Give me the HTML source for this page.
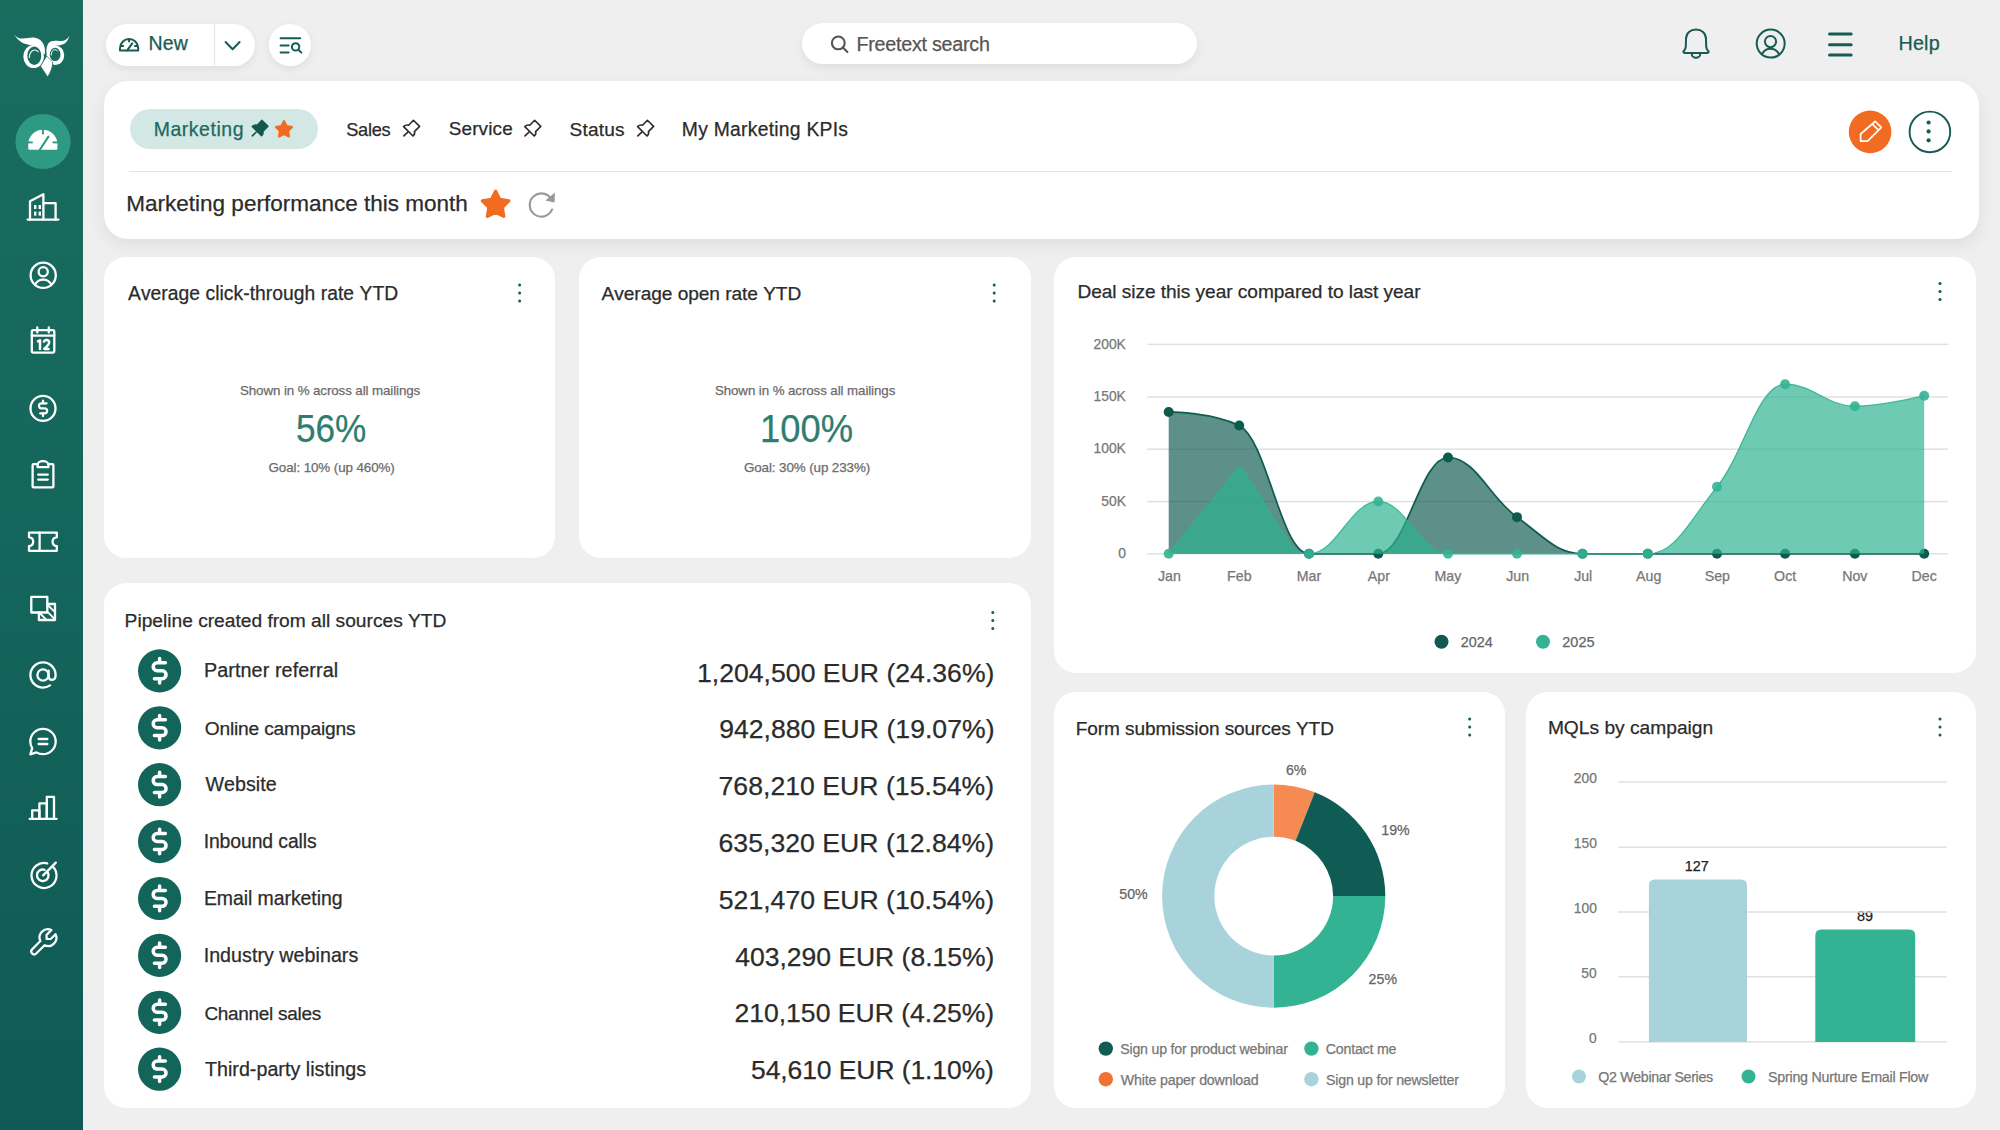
<!DOCTYPE html>
<html><head><meta charset="utf-8"><title>Marketing dashboard</title>
<style>
html,body{margin:0;padding:0}
body{width:2000px;height:1130px;overflow:hidden;background:#efefef;position:relative;font-family:"Liberation Sans",sans-serif;}
.t{position:absolute;white-space:nowrap;line-height:1;font-kerning:none;-webkit-text-stroke:0.25px currentColor;}
.card{position:absolute;background:#fff;}
.ic{position:absolute;overflow:visible}
</style></head><body>

<div style="position:absolute;left:0;top:0;width:83px;height:1130px;background:linear-gradient(180deg,#1a6c5f 0%,#14655b 50%,#0f5a55 100%)"></div>
<svg class="ic" style="left:0;top:0" width="83" height="1130" viewBox="0 0 83 1130"><g fill="#fff" fill-rule="evenodd"><path d="M14,34.4 C17,37.8 20,38.8 23,38.6 C27,38.2 31,37.2 35,37.8 C40,38.6 44.6,43 45,50 L44.8,54.5 L41.2,51.8 C40.2,48.6 38.2,46.2 34.3,45.4 C29,44.7 24,44.3 20.5,41.4 C18,39.6 15.5,36.8 14,34.4 Z"/><path d="M69.4,35.9 C67.2,39.5 64.6,40.7 61,40.9 C57,41.1 53.6,40.3 50.6,41.6 C47.6,43.1 46.3,47 46.4,52 L46.8,56 L49.7,53.6 C50.3,50.1 51.6,47.9 53.6,46.7 C56.1,45.3 60.1,45.6 63.2,44.3 C66.1,43.1 68.1,40.1 69.4,35.9 Z"/><path d="M23.3,56.5 A10.35,11.5 0 1 0 44,56.5 A10.35,11.5 0 1 0 23.3,56.5 Z M27.3,55.8 A7,9.2 0 1 1 41.3,55.8 A7,9.2 0 1 1 27.3,55.8 Z"/><path d="M46.7,55.25 A8.75,9.75 0 1 0 64.2,55.25 A8.75,9.75 0 1 0 46.7,55.25 Z M49.7,54.4 A5.4,6.7 0 1 1 60.5,54.4 A5.4,6.7 0 1 1 49.7,54.4 Z"/></g><path d="M40.5,66.3 L46.7,56.1 L52.6,61.9 C52.7,67.5 50.6,72.5 47.6,76.9 C45.3,73.2 42.8,69.7 40.5,66.3 Z" fill="#fff" stroke="#1a6c5f" stroke-width="0.7"/><path d="M29.2,58 C29.4,52.5 32,49.8 35,50 C36.6,50.1 37.8,51 38.4,52.2" stroke="#fff" stroke-width="1.1" fill="none"/><path d="M51.2,55.5 C51.3,51.6 53,49.6 55.2,49.7 C56.4,49.8 57.2,50.4 57.7,51.3" stroke="#fff" stroke-width="1" fill="none"/><circle cx="43" cy="141.5" r="27.6" fill="#2e9a84"/><path d="M28.3,144.3 A14.55,14.55 0 0 1 57.4,144.3 L57.4,148.5 Q57.4,149.7 56.2,149.7 L29.5,149.7 Q28.3,149.7 28.3,148.5 Z" fill="#fff"/><g stroke="#2e9a84" stroke-width="1.9" stroke-linecap="butt"><line x1="43" y1="129" x2="43" y2="134.4"/><line x1="27.5" y1="142.4" x2="32.8" y2="142.4"/><line x1="52.6" y1="142.4" x2="58" y2="142.4"/><line x1="39.4" y1="150.5" x2="48.4" y2="136.6" stroke-width="2.1" stroke-linecap="round"/></g><g stroke="#fff" fill="none" stroke-width="2.3" stroke-linecap="round" stroke-linejoin="round"><path d="M27.6,219.6 H58.4"/><path d="M30,219.6 V201.3 L43.4,194.2 V219.6"/><path d="M43.4,203.2 H55.6 V219.6"/></g><g fill="#fff"><rect x="34" y="205" width="2.4" height="4"/><rect x="38.6" y="205" width="2.4" height="4"/><rect x="34" y="211.6" width="2.4" height="4"/><rect x="38.6" y="211.6" width="2.4" height="4"/></g><g stroke="#fff" fill="none" stroke-width="2.3" stroke-linecap="round" stroke-linejoin="round"><circle cx="43.2" cy="275.3" r="12.6"/><circle cx="43.2" cy="271.8" r="4.6"/><path d="M35,284.6 C37,281 40,279.6 43.2,279.6 C46.4,279.6 49.4,281 51.4,284.6"/></g><g stroke="#fff" fill="none" stroke-width="2.3" stroke-linecap="round" stroke-linejoin="round"><rect x="31.8" y="330.2" width="22.5" height="22.4" rx="1.6"/><path d="M31.8,335.6 H54.3"/><path d="M37.3,327.4 V332.4 M48.8,327.4 V332.4"/></g><g stroke="#fff" fill="none" stroke-width="2.5" stroke-linejoin="round" stroke-linecap="butt"><path d="M37.2,341.9 L40,340.2 V350"/><path d="M43.8,342.6 C44,340.9 45,340.1 46.5,340.1 C48.2,340.1 49.2,341.1 49.2,342.6 C49.2,344.2 47.9,345.6 44.3,348.9 H49.6"/></g><g stroke="#fff" fill="none" stroke-width="2.3" stroke-linecap="round" stroke-linejoin="round"><circle cx="43" cy="408.4" r="12.5"/></g><g stroke="#fff" fill="none" stroke-width="2.2" stroke-linecap="round" stroke-linejoin="round"><path d="M46.6,403.3 H41.5 A2.5,2.5 0 0 0 41.5,408.3 H44.6 A2.55,2.55 0 0 1 44.6,413.4 H40.2"/><path d="M43,400.7 V403.3 M43,413.4 V416.1"/></g><g stroke="#fff" fill="none" stroke-width="2.3" stroke-linecap="round" stroke-linejoin="round"><path d="M37.6,464.2 H33.6 Q32.6,464.2 32.6,465.2 V486.4 Q32.6,487.4 33.6,487.4 H52.4 Q53.4,487.4 53.4,486.4 V465.2 Q53.4,464.2 52.4,464.2 H48.4"/><path d="M37.6,467.2 V464.8 C37.6,462.6 40,461.2 43,461.2 C46,461.2 48.4,462.6 48.4,464.8 V467.2 Z"/><path d="M38.2,474.6 H47.8 M38.2,479.6 H47.8"/></g><g stroke="#fff" fill="none" stroke-width="2.3" stroke-linecap="round" stroke-linejoin="round"><path d="M29,532.6 H56.8 V537.2 C54.2,537.6 52.6,539.4 52.6,541.7 C52.6,544 54.2,545.8 56.8,546.2 V550.8 H29 V546.2 C31.6,545.8 33.2,544 33.2,541.7 C33.2,539.4 31.6,537.6 29,537.2 Z"/><path d="M39.6,532.6 V550.8"/></g><g stroke="#fff" fill="none" stroke-width="2.3" stroke-linecap="round" stroke-linejoin="round"><rect x="31.3" y="596.9" width="16" height="15.6"/><path d="M47.3,604 H55 V620 H38.9 V612.5"/></g><g stroke="#fff" stroke-width="1.9" stroke-linecap="butt"><path d="M47.3,604.6 L54.4,611.7 M47.3,611.6 L55,619.3 M39.6,613 L46.3,619.7"/></g><g stroke="#fff" fill="none" stroke-width="2.3" stroke-linecap="round" stroke-linejoin="round"><circle cx="43" cy="675" r="5.6"/><path d="M48.6,670.6 V676.2 C48.6,678.6 50.2,679.8 52,679.8 C54.6,679.8 55.6,677.2 55.6,675 C55.6,668 50,662.4 43,662.4 C36,662.4 30.4,668 30.4,675 C30.4,682 36,687.6 43,687.6 C45.8,687.6 48,686.8 50,685.4"/></g><g stroke="#fff" fill="none" stroke-width="2.3" stroke-linecap="round" stroke-linejoin="round"><path d="M32.2,748.2 C30.9,746 30.3,743.6 30.3,741.5 C30.3,734.5 36,728.8 43,728.8 C50,728.8 55.7,734.5 55.7,741.5 C55.7,748.5 50,754.2 43,754.2 C40.5,754.2 38.3,753.6 36.4,752.4 L30.4,754.3 Z"/><path d="M38.6,739 H47.4 M38.6,744 H47.4"/></g><g stroke="#fff" fill="none" stroke-width="2.3" stroke-linecap="round" stroke-linejoin="round"><path d="M29.6,818.8 H56.6"/><path d="M32.2,818.8 V810.4 H39.4 V818.8"/><path d="M39.4,818.8 V803.4 H46.8 V818.8"/><path d="M46.8,818.8 V796.8 H54 V818.8"/></g><g stroke="#fff" fill="none" stroke-width="2.3" stroke-linecap="round" stroke-linejoin="round"><path d="M52.8,866.6 A12.5,12.5 0 1 1 47.2,863.4"/><path d="M47.9,872.6 A5.8,5.8 0 1 1 44.6,869.8"/><path d="M43.2,875.4 L55.8,862.6"/></g><g transform="translate(60.4,925.2) scale(-1.38,1.38)" stroke="#fff" fill="none" stroke-width="1.62" stroke-linecap="round" stroke-linejoin="round"><path d="M7,10 h3 v-3 l-3.5,-3.5 a6,6 0 0 1 8,8 l6,6 a2,2 0 0 1 -3,3 l-6,-6 a6,6 0 0 1 -8,-8 l3.5,3.5"/></g></svg>
<div class="card" style="left:105.5px;top:24.4px;width:149.5px;height:41.2px;border-radius:21px;box-shadow:0 3px 8px rgba(0,0,0,0.07)"></div>
<div style="position:absolute;left:213.8px;top:24.4px;width:1.2px;height:41.2px;background:#e4e4e4"></div>
<div class="card" style="left:269.4px;top:24.4px;width:41.3px;height:41.2px;border-radius:50%;box-shadow:0 3px 8px rgba(0,0,0,0.07)"></div>
<div class="card" style="left:802.4px;top:23.4px;width:394.6px;height:41px;border-radius:21px;box-shadow:0 4px 10px rgba(0,0,0,0.07)"></div>
<svg class="ic" style="left:0;top:0" width="2000" height="80" viewBox="0 0 2000 80"><g stroke="#175c52" fill="none" stroke-width="2" stroke-linecap="round" stroke-linejoin="round"><path d="M120,50.6 V48.2 A9.1,9.1 0 0 1 138.2,48.2 V50.6 Z"/><path d="M129.1,39.2 V41.4 M121.2,46 H123.2 M135,46 H137 M127.2,50.4 L132.2,43.4"/></g><path d="M225.6,42 L232.6,49.2 L239.6,42" stroke="#175c52" fill="none" stroke-width="2" stroke-linecap="round" stroke-linejoin="round"/><g stroke="#175c52" fill="none" stroke-width="2" stroke-linecap="round" stroke-linejoin="round" stroke-width="2.2"><path d="M280.6,38.2 H300.2 M280.6,45.6 H288.6 M280.6,52.4 H288.6"/><circle cx="295.6" cy="46.9" r="3.7"/><path d="M298.4,49.7 L301.4,52.6"/></g><g stroke="#555" fill="none" stroke-width="2.1" stroke-linecap="round"><circle cx="838.3" cy="42.9" r="6.4"/><path d="M843,47.6 L847.4,52.1"/></g><g stroke="#175c52" fill="none" stroke-width="2" stroke-linecap="round" stroke-linejoin="round" stroke-width="2.3"><path d="M1696,29.5 C1690.4,29.5 1686.2,33 1686,38.8 L1685.8,46.6 C1685.7,49.6 1684.2,50.4 1683.6,51.2 C1683,52 1683.4,53 1684.6,53 H1707.4 C1708.6,53 1709,52 1708.4,51.2 C1707.8,50.4 1706.3,49.6 1706.2,46.6 L1706,38.8 C1705.8,33 1701.6,29.5 1696,29.5 Z"/><path d="M1691.7,53.4 A4.3,4.3 0 0 0 1700.3,53.4"/></g><g stroke="#175c52" fill="none" stroke-width="2" stroke-linecap="round" stroke-linejoin="round" stroke-width="2.3"><circle cx="1770.7" cy="43.6" r="14"/><circle cx="1770.5" cy="41.6" r="5.6"/><path d="M1762.2,53.6 C1764.2,50.4 1767.2,48.8 1770.5,48.8 C1773.8,48.8 1776.8,50.4 1778.8,53.6"/></g><g fill="#175c52"><rect x="1828" y="32.4" width="24.6" height="3" rx="1.5"/><rect x="1828" y="43.2" width="24.6" height="3" rx="1.5"/><rect x="1828" y="53.4" width="24.6" height="3" rx="1.5"/></g></svg>
<span class="t" style="left:148.50px;top:34.20px;font-size:19.53px;color:#175c52;letter-spacing:0.125px">New</span>
<span class="t" style="left:856.50px;top:34.84px;font-size:19.72px;color:#555;letter-spacing:-0.250px">Freetext search</span>
<span class="t" style="left:1898.50px;top:33.69px;font-size:19.78px;color:#175c52;letter-spacing:0.167px">Help</span>
<div class="card" style="left:104px;top:81px;width:1875px;height:158px;border-radius:24px;box-shadow:0 6px 18px rgba(0,0,0,0.07)"></div>
<div style="position:absolute;left:129.6px;top:109.3px;width:188px;height:39.5px;border-radius:20px;background:#d3e7e4"></div>
<div style="position:absolute;left:129px;top:170.8px;width:1823px;height:1.5px;background:#e3e5e5"></div>
<svg class="ic" style="left:0;top:80" width="2000" height="160" viewBox="0 80 2000 160"><path d="M261.90,120.20 L268.10,126.30 L262.90,131.50 C263.50,133.30 263.00,134.90 261.50,135.90 L252.10,126.50 C253.50,125.10 255.30,124.70 257.10,125.10 Z" fill="#11594f" stroke="#11594f" stroke-width="1.2" stroke-linejoin="round"/><path d="M256.30,132.00 L252.30,135.80" stroke="#11594f" stroke-width="1.6" stroke-linecap="round"/><polygon points="284.00,121.20 286.59,126.04 291.99,127.00 288.18,130.96 288.94,136.40 284.00,134.00 279.06,136.40 279.82,130.96 276.01,127.00 281.41,126.04" fill="#f26b22" stroke="#f26b22" stroke-width="2.2" stroke-linejoin="round"/><g stroke="#2b2b2b" fill="none" stroke-width="1.6" stroke-linejoin="round" stroke-linecap="round"><path d="M413.40,120.30 L419.60,126.40 L414.40,131.60 C415.00,133.40 414.50,135.00 413.00,136.00 L403.60,126.60 C405.00,125.20 406.80,124.80 408.60,125.20 Z"/><path d="M407.80,132.10 L403.80,135.90"/></g><g stroke="#2b2b2b" fill="none" stroke-width="1.6" stroke-linejoin="round" stroke-linecap="round"><path d="M534.60,120.30 L540.80,126.40 L535.60,131.60 C536.20,133.40 535.70,135.00 534.20,136.00 L524.80,126.60 C526.20,125.20 528.00,124.80 529.80,125.20 Z"/><path d="M529.00,132.10 L525.00,135.90"/></g><g stroke="#2b2b2b" fill="none" stroke-width="1.6" stroke-linejoin="round" stroke-linecap="round"><path d="M647.40,120.30 L653.60,126.40 L648.40,131.60 C649.00,133.40 648.50,135.00 647.00,136.00 L637.60,126.60 C639.00,125.20 640.80,124.80 642.60,125.20 Z"/><path d="M641.80,132.10 L637.80,135.90"/></g><circle cx="1870.1" cy="131.9" r="21.3" fill="#f26b22"/><g stroke="#fff" fill="none" stroke-width="1.7" stroke-linejoin="round"><path d="M1875.2,121.3 L1881.3,127.4 L1867.6,141.1 H1860.6 V134 Z"/><path d="M1872.4,124.1 L1878.5,130.2"/></g><circle cx="1929.9" cy="131.9" r="20.3" fill="none" stroke="#175c52" stroke-width="1.9"/><g fill="#175c52"><circle cx="1928.6" cy="122.5" r="2.1"/><circle cx="1928.6" cy="131.4" r="2.1"/><circle cx="1928.6" cy="140.3" r="2.1"/></g><polygon points="495.60,191.20 499.77,199.36 508.82,200.80 502.35,207.29 503.77,216.35 495.60,212.20 487.43,216.35 488.85,207.29 482.38,200.80 491.43,199.36" fill="#f26b22" stroke="#f26b22" stroke-width="3.2" stroke-linejoin="round"/><g stroke="#999" fill="none" stroke-width="2.1" stroke-linecap="round"><path d="M551.6,199.6 A11.6,11.6 0 1 0 552.1,209.4"/></g><path d="M554.9,192.6 L554.6,202.6 L545.4,200.6 Z" fill="#999"/></svg>
<span class="t" style="left:153.70px;top:119.96px;font-size:19.46px;color:#1b6a5e;letter-spacing:0.556px">Marketing</span>
<span class="t" style="left:346.15px;top:120.99px;font-size:18.25px;color:#2b2b2b;letter-spacing:-0.287px">Sales</span>
<span class="t" style="left:448.75px;top:120.38px;font-size:18.96px;color:#2b2b2b;letter-spacing:0.133px">Service</span>
<span class="t" style="left:569.45px;top:120.27px;font-size:19.09px;color:#2b2b2b;letter-spacing:0.220px">Status</span>
<span class="t" style="left:681.80px;top:120.09px;font-size:19.31px;color:#2b2b2b;letter-spacing:0.269px">My Marketing KPIs</span>
<span class="t" style="left:126.25px;top:193.35px;font-size:22.53px;color:#2b2b2b">Marketing performance this month</span>
<div class="card" style="left:104px;top:257px;width:451px;height:301px;border-radius:22px;"></div>
<div class="card" style="left:579px;top:257px;width:452px;height:301px;border-radius:22px;"></div>
<div class="card" style="left:1054px;top:257px;width:922px;height:416px;border-radius:22px;"></div>
<div class="card" style="left:104px;top:583px;width:927px;height:525px;border-radius:22px;"></div>
<div class="card" style="left:1054px;top:692px;width:451px;height:416px;border-radius:22px;"></div>
<div class="card" style="left:1526px;top:692px;width:450px;height:416px;border-radius:22px;"></div>
<span class="t" style="left:128.00px;top:283.60px;font-size:19.30px;color:#2b2b2b;letter-spacing:0.040px">Average click-through rate YTD</span>
<span class="t" style="left:601.60px;top:283.75px;font-size:19.12px;color:#2b2b2b;letter-spacing:-0.055px">Average open rate YTD</span>
<span class="t" style="left:240.00px;top:384.47px;font-size:13.33px;color:#6b6b6b;letter-spacing:-0.095px">Shown in % across all mailings</span>
<span class="t" style="left:295.63px;top:409.86px;font-size:38.40px;color:#2e7d6e;transform:scaleX(0.9158);transform-origin:0 0">56%</span>
<span class="t" style="left:268.50px;top:460.61px;font-size:13.40px;color:#6b6b6b;letter-spacing:-0.097px">Goal: 10% (up 460%)</span>
<span class="t" style="left:714.90px;top:384.46px;font-size:13.34px;color:#6b6b6b;letter-spacing:-0.088px">Shown in % across all mailings</span>
<span class="t" style="left:759.74px;top:409.86px;font-size:38.40px;color:#2e7d6e;transform:scaleX(0.9475);transform-origin:0 0">100%</span>
<span class="t" style="left:743.90px;top:460.61px;font-size:13.40px;color:#6b6b6b;letter-spacing:-0.097px">Goal: 30% (up 233%)</span>
<span class="t" style="left:1077.40px;top:282.46px;font-size:19.11px;color:#2b2b2b;letter-spacing:-0.051px">Deal size this year compared to last year</span>
<span class="t" style="left:1093.60px;top:337.57px;font-size:13.80px;color:#777">200K</span>
<span class="t" style="left:1093.60px;top:390.17px;font-size:13.80px;color:#777">150K</span>
<span class="t" style="left:1093.60px;top:442.37px;font-size:13.80px;color:#777">100K</span>
<span class="t" style="left:1101.35px;top:494.77px;font-size:13.80px;color:#777">50K</span>
<span class="t" style="left:1118.35px;top:546.97px;font-size:13.80px;color:#777">0</span>
<span class="t" style="left:1157.98px;top:569.43px;font-size:14.20px;color:#777">Jan</span>
<span class="t" style="left:1227.10px;top:569.43px;font-size:14.20px;color:#777">Feb</span>
<span class="t" style="left:1296.78px;top:569.43px;font-size:14.20px;color:#777">Mar</span>
<span class="t" style="left:1367.83px;top:569.43px;font-size:14.20px;color:#777">Apr</span>
<span class="t" style="left:1434.53px;top:569.43px;font-size:14.20px;color:#777">May</span>
<span class="t" style="left:1506.28px;top:569.43px;font-size:14.20px;color:#777">Jun</span>
<span class="t" style="left:1574.15px;top:569.43px;font-size:14.20px;color:#777">Jul</span>
<span class="t" style="left:1636.08px;top:569.43px;font-size:14.20px;color:#777">Aug</span>
<span class="t" style="left:1704.78px;top:569.43px;font-size:14.20px;color:#777">Sep</span>
<span class="t" style="left:1774.12px;top:569.43px;font-size:14.20px;color:#777">Oct</span>
<span class="t" style="left:1842.18px;top:569.43px;font-size:14.20px;color:#777">Nov</span>
<span class="t" style="left:1911.60px;top:569.43px;font-size:14.20px;color:#777">Dec</span>
<span class="t" style="left:1460.75px;top:634.86px;font-size:14.40px;color:#666">2024</span>
<span class="t" style="left:1562.25px;top:634.81px;font-size:14.46px;color:#666;letter-spacing:0.083px">2025</span>
<span class="t" style="left:124.60px;top:611.39px;font-size:19.19px;color:#2b2b2b;letter-spacing:-0.007px">Pipeline created from all sources YTD</span>
<span class="t" style="left:203.90px;top:661.09px;font-size:19.78px;color:#2b2b2b;letter-spacing:0.090px">Partner referral</span>
<span class="t" style="left:697.00px;top:659.50px;font-size:26.59px;color:#2b2b2b;letter-spacing:0.021px">1,204,500 EUR (24.36%)</span>
<span class="t" style="left:204.65px;top:718.53px;font-size:19.21px;color:#2b2b2b;letter-spacing:-0.177px">Online campaigns</span>
<span class="t" style="left:719.15px;top:716.29px;font-size:26.59px;color:#2b2b2b;letter-spacing:0.029px">942,880 EUR (19.07%)</span>
<span class="t" style="left:205.40px;top:775.12px;font-size:19.65px;color:#2b2b2b;letter-spacing:0.058px">Website</span>
<span class="t" style="left:718.55px;top:773.05px;font-size:26.62px;color:#2b2b2b;letter-spacing:0.021px">768,210 EUR (15.54%)</span>
<span class="t" style="left:203.65px;top:832.31px;font-size:19.38px;color:#2b2b2b;letter-spacing:-0.087px">Inbound calls</span>
<span class="t" style="left:718.55px;top:829.84px;font-size:26.62px;color:#2b2b2b;letter-spacing:0.021px">635,320 EUR (12.84%)</span>
<span class="t" style="left:203.90px;top:889.18px;font-size:19.48px;color:#2b2b2b;letter-spacing:-0.068px">Email marketing</span>
<span class="t" style="left:718.80px;top:886.64px;font-size:26.61px;color:#2b2b2b;letter-spacing:0.008px">521,470 EUR (10.54%)</span>
<span class="t" style="left:203.65px;top:946.00px;font-size:19.65px;color:#2b2b2b;letter-spacing:0.044px">Industry webinars</span>
<span class="t" style="left:735.20px;top:943.51px;font-size:26.52px;color:#2b2b2b;letter-spacing:-0.014px">403,290 EUR (8.15%)</span>
<span class="t" style="left:204.40px;top:1003.52px;font-size:18.99px;color:#2b2b2b;letter-spacing:-0.296px">Channel sales</span>
<span class="t" style="left:734.45px;top:1000.26px;font-size:26.56px;color:#2b2b2b">210,150 EUR (4.25%)</span>
<span class="t" style="left:204.90px;top:1059.90px;font-size:19.67px;color:#2b2b2b;letter-spacing:0.034px">Third-party listings</span>
<span class="t" style="left:751.00px;top:1057.13px;font-size:26.47px;color:#2b2b2b;letter-spacing:-0.076px">54,610 EUR (1.10%)</span>
<span class="t" style="left:1075.70px;top:718.50px;font-size:19.06px;color:#2b2b2b;letter-spacing:-0.083px">Form submission sources YTD</span>
<span class="t" style="left:1285.90px;top:762.93px;font-size:14.20px;color:#666">6%</span>
<span class="t" style="left:1381.30px;top:822.93px;font-size:14.20px;color:#666">19%</span>
<span class="t" style="left:1368.62px;top:971.93px;font-size:14.20px;color:#666">25%</span>
<span class="t" style="left:1119.25px;top:886.93px;font-size:14.20px;color:#666">50%</span>
<span class="t" style="left:1120.30px;top:1042.29px;font-size:14.13px;color:#777;letter-spacing:-0.200px">Sign up for product webinar</span>
<span class="t" style="left:1325.85px;top:1042.25px;font-size:14.18px;color:#777;letter-spacing:-0.217px">Contact me</span>
<span class="t" style="left:1120.80px;top:1072.81px;font-size:14.22px;color:#777;letter-spacing:-0.189px">White paper download</span>
<span class="t" style="left:1326.10px;top:1072.87px;font-size:14.15px;color:#777;letter-spacing:-0.190px">Sign up for newsletter</span>
<span class="t" style="left:1547.90px;top:718.48px;font-size:19.20px;color:#2b2b2b">MQLs by campaign</span>
<span class="t" style="left:1573.80px;top:771.97px;font-size:13.80px;color:#777">200</span>
<span class="t" style="left:1573.80px;top:837.17px;font-size:13.80px;color:#777">150</span>
<span class="t" style="left:1573.80px;top:901.97px;font-size:13.80px;color:#777">100</span>
<span class="t" style="left:1581.30px;top:966.77px;font-size:13.80px;color:#777">50</span>
<span class="t" style="left:1589.05px;top:1031.87px;font-size:13.80px;color:#777">0</span>
<span class="t" style="left:1684.75px;top:858.76px;font-size:14.40px;color:#222">127</span>
<span class="t" style="left:1857.00px;top:908.76px;font-size:14.40px;color:#222">89</span>
<span class="t" style="left:1598.20px;top:1070.36px;font-size:14.28px;color:#777;letter-spacing:-0.347px">Q2 Webinar Series</span>
<span class="t" style="left:1768.10px;top:1070.36px;font-size:14.28px;color:#777;letter-spacing:-0.260px">Spring Nurture Email Flow</span>
<svg class="ic" style="left:0;top:0;z-index:0" width="2000" height="1130" viewBox="0 0 2000 1130"><g fill="#175c52"><circle cx="519.6" cy="285.0" r="1.5"/><circle cx="519.6" cy="293.0" r="1.5"/><circle cx="519.6" cy="301.0" r="1.5"/></g><g fill="#175c52"><circle cx="994.2" cy="285.0" r="1.5"/><circle cx="994.2" cy="293.0" r="1.5"/><circle cx="994.2" cy="301.0" r="1.5"/></g><g fill="#175c52"><circle cx="1940.0" cy="283.4" r="1.5"/><circle cx="1940.0" cy="291.4" r="1.5"/><circle cx="1940.0" cy="299.4" r="1.5"/></g><g fill="#175c52"><circle cx="992.8" cy="612.6" r="1.5"/><circle cx="992.8" cy="620.6" r="1.5"/><circle cx="992.8" cy="628.6" r="1.5"/></g><g fill="#175c52"><circle cx="1469.7" cy="719.0" r="1.5"/><circle cx="1469.7" cy="727.0" r="1.5"/><circle cx="1469.7" cy="735.0" r="1.5"/></g><g fill="#175c52"><circle cx="1940.0" cy="719.0" r="1.5"/><circle cx="1940.0" cy="727.0" r="1.5"/><circle cx="1940.0" cy="735.0" r="1.5"/></g><rect x="1147.4" y="343.70" width="800.4" height="1.4" fill="#dedede"/><rect x="1147.4" y="396.30" width="800.4" height="1.4" fill="#dedede"/><rect x="1147.4" y="448.50" width="800.4" height="1.4" fill="#dedede"/><rect x="1147.4" y="500.90" width="800.4" height="1.4" fill="#dedede"/><rect x="1147.4" y="553.10" width="800.4" height="1.4" fill="#dedede"/><path d="M1168.70,411.93 C1168.70,411.93 1211.00,411.93 1239.20,425.54 C1267.12,439.15 1281.08,553.80 1309.00,553.80 C1336.72,553.80 1350.58,553.80 1378.30,553.80 C1406.18,553.80 1420.12,457.48 1448.00,457.48 C1475.60,457.48 1489.40,497.39 1517.00,517.15 C1543.20,535.92 1556.30,553.80 1582.50,553.80 C1608.62,553.80 1621.68,553.80 1647.80,553.80 C1675.48,553.80 1689.32,553.80 1717.00,553.80 C1744.24,553.80 1757.86,553.80 1785.10,553.80 C1813.02,553.80 1826.98,553.80 1854.90,553.80 C1882.62,553.80 1924.20,553.80 1924.20,553.80 L1924.20,553.80 L1168.70,553.80 Z" fill="#0f5c50" fill-opacity="0.68"/><path d="M1168.70,411.93 C1168.70,411.93 1211.00,411.93 1239.20,425.54 C1267.12,439.15 1281.08,553.80 1309.00,553.80 C1336.72,553.80 1350.58,553.80 1378.30,553.80 C1406.18,553.80 1420.12,457.48 1448.00,457.48 C1475.60,457.48 1489.40,497.39 1517.00,517.15 C1543.20,535.92 1556.30,553.80 1582.50,553.80 C1608.62,553.80 1621.68,553.80 1647.80,553.80 C1675.48,553.80 1689.32,553.80 1717.00,553.80 C1744.24,553.80 1757.86,553.80 1785.10,553.80 C1813.02,553.80 1826.98,553.80 1854.90,553.80 C1882.62,553.80 1924.20,553.80 1924.20,553.80" fill="none" stroke="#0f5c50" stroke-width="1.7"/><circle cx="1168.70" cy="411.93" r="5" fill="#0d5a4e"/><circle cx="1239.20" cy="425.54" r="5" fill="#0d5a4e"/><circle cx="1309.00" cy="553.80" r="5" fill="#0d5a4e"/><circle cx="1378.30" cy="553.80" r="5" fill="#0d5a4e"/><circle cx="1448.00" cy="457.48" r="5" fill="#0d5a4e"/><circle cx="1517.00" cy="517.15" r="5" fill="#0d5a4e"/><circle cx="1582.50" cy="553.80" r="5" fill="#0d5a4e"/><circle cx="1647.80" cy="553.80" r="5" fill="#0d5a4e"/><circle cx="1717.00" cy="553.80" r="5" fill="#0d5a4e"/><circle cx="1785.10" cy="553.80" r="5" fill="#0d5a4e"/><circle cx="1854.90" cy="553.80" r="5" fill="#0d5a4e"/><circle cx="1924.20" cy="553.80" r="5" fill="#0d5a4e"/><path d="M1168.70,553.80 L1236.2,470.6 Q1240,464.6 1243.8,470.6 L1290.5,544.5 Q1296.5,553.8 1309.00,553.80 C1336.72,553.80 1350.58,501.45 1378.30,501.45 C1406.18,501.45 1420.12,553.80 1448.00,553.80 C1475.60,553.80 1489.40,553.80 1517.00,553.80 C1543.20,553.80 1556.30,553.80 1582.50,553.80 C1608.62,553.80 1621.68,553.80 1647.80,553.80 C1675.48,553.80 1689.32,520.99 1717.00,486.79 C1744.24,453.14 1757.86,384.19 1785.10,384.19 C1813.02,384.19 1826.98,406.17 1854.90,406.17 C1882.62,406.17 1924.20,395.70 1924.20,395.70 L1924.20,553.80 L1168.70,553.80 Z" fill="#2db291" fill-opacity="0.69"/><path d="M1168.70,553.80 L1236.2,470.6 Q1240,464.6 1243.8,470.6 L1290.5,544.5 Q1296.5,553.8 1309.00,553.80 C1336.72,553.80 1350.58,501.45 1378.30,501.45 C1406.18,501.45 1420.12,553.80 1448.00,553.80 C1475.60,553.80 1489.40,553.80 1517.00,553.80 C1543.20,553.80 1556.30,553.80 1582.50,553.80 C1608.62,553.80 1621.68,553.80 1647.80,553.80 C1675.48,553.80 1689.32,520.99 1717.00,486.79 C1744.24,453.14 1757.86,384.19 1785.10,384.19 C1813.02,384.19 1826.98,406.17 1854.90,406.17 C1882.62,406.17 1924.20,395.70 1924.20,395.70" fill="none" stroke="#2db291" stroke-width="1.2" stroke-opacity="0.9"/><circle cx="1168.70" cy="553.80" r="5" fill="#34b393" fill-opacity="0.9"/><circle cx="1309.00" cy="553.80" r="5" fill="#34b393" fill-opacity="0.9"/><circle cx="1378.30" cy="501.45" r="5" fill="#34b393" fill-opacity="0.9"/><circle cx="1448.00" cy="553.80" r="5" fill="#34b393" fill-opacity="0.9"/><circle cx="1517.00" cy="553.80" r="5" fill="#34b393" fill-opacity="0.9"/><circle cx="1582.50" cy="553.80" r="5" fill="#34b393" fill-opacity="0.9"/><circle cx="1647.80" cy="553.80" r="5" fill="#34b393" fill-opacity="0.9"/><circle cx="1717.00" cy="486.79" r="5" fill="#34b393" fill-opacity="0.9"/><circle cx="1785.10" cy="384.19" r="5" fill="#34b393" fill-opacity="0.9"/><circle cx="1854.90" cy="406.17" r="5" fill="#34b393" fill-opacity="0.9"/><circle cx="1924.20" cy="395.70" r="5" fill="#34b393" fill-opacity="0.9"/><circle cx="1441.5" cy="641.7" r="7" fill="#11594f"/><circle cx="1543" cy="641.7" r="7" fill="#34b394"/><circle cx="159.6" cy="670.90" r="21.6" fill="#13655a"/><g stroke="#fff" fill="none" stroke-width="3.5" stroke-linecap="round" stroke-linejoin="round"><path d="M165.4,662.80 H157.2 A4,4 0 0 0 157.2,670.80 H162.1 A3.95,3.95 0 0 1 162.1,678.70 H154.4"/><path d="M159.6,658.50 V662.30 M159.6,679.50 V683.10"/></g><circle cx="159.6" cy="727.80" r="21.6" fill="#13655a"/><g stroke="#fff" fill="none" stroke-width="3.5" stroke-linecap="round" stroke-linejoin="round"><path d="M165.4,719.70 H157.2 A4,4 0 0 0 157.2,727.70 H162.1 A3.95,3.95 0 0 1 162.1,735.60 H154.4"/><path d="M159.6,715.40 V719.20 M159.6,736.40 V740.00"/></g><circle cx="159.6" cy="784.70" r="21.6" fill="#13655a"/><g stroke="#fff" fill="none" stroke-width="3.5" stroke-linecap="round" stroke-linejoin="round"><path d="M165.4,776.60 H157.2 A4,4 0 0 0 157.2,784.60 H162.1 A3.95,3.95 0 0 1 162.1,792.50 H154.4"/><path d="M159.6,772.30 V776.10 M159.6,793.30 V796.90"/></g><circle cx="159.6" cy="841.60" r="21.6" fill="#13655a"/><g stroke="#fff" fill="none" stroke-width="3.5" stroke-linecap="round" stroke-linejoin="round"><path d="M165.4,833.50 H157.2 A4,4 0 0 0 157.2,841.50 H162.1 A3.95,3.95 0 0 1 162.1,849.40 H154.4"/><path d="M159.6,829.20 V833.00 M159.6,850.20 V853.80"/></g><circle cx="159.6" cy="898.50" r="21.6" fill="#13655a"/><g stroke="#fff" fill="none" stroke-width="3.5" stroke-linecap="round" stroke-linejoin="round"><path d="M165.4,890.40 H157.2 A4,4 0 0 0 157.2,898.40 H162.1 A3.95,3.95 0 0 1 162.1,906.30 H154.4"/><path d="M159.6,886.10 V889.90 M159.6,907.10 V910.70"/></g><circle cx="159.6" cy="955.40" r="21.6" fill="#13655a"/><g stroke="#fff" fill="none" stroke-width="3.5" stroke-linecap="round" stroke-linejoin="round"><path d="M165.4,947.30 H157.2 A4,4 0 0 0 157.2,955.30 H162.1 A3.95,3.95 0 0 1 162.1,963.20 H154.4"/><path d="M159.6,943.00 V946.80 M159.6,964.00 V967.60"/></g><circle cx="159.6" cy="1012.30" r="21.6" fill="#13655a"/><g stroke="#fff" fill="none" stroke-width="3.5" stroke-linecap="round" stroke-linejoin="round"><path d="M165.4,1004.20 H157.2 A4,4 0 0 0 157.2,1012.20 H162.1 A3.95,3.95 0 0 1 162.1,1020.10 H154.4"/><path d="M159.6,999.90 V1003.70 M159.6,1020.90 V1024.50"/></g><circle cx="159.6" cy="1069.20" r="21.6" fill="#13655a"/><g stroke="#fff" fill="none" stroke-width="3.5" stroke-linecap="round" stroke-linejoin="round"><path d="M165.4,1061.10 H157.2 A4,4 0 0 0 157.2,1069.10 H162.1 A3.95,3.95 0 0 1 162.1,1077.00 H154.4"/><path d="M159.6,1056.80 V1060.60 M159.6,1077.80 V1081.40"/></g><path d="M1273.70,784.50 A111.60,111.60 0 0 1 1314.78,792.34 L1295.57,840.87 A59.40,59.40 0 0 0 1273.70,836.70 Z" fill="#f58a52"/><path d="M1314.78,792.34 A111.60,111.60 0 0 1 1385.30,896.10 L1333.10,896.10 A59.40,59.40 0 0 0 1295.57,840.87 Z" fill="#0f5c54"/><path d="M1385.30,896.10 A111.60,111.60 0 0 1 1273.70,1007.70 L1273.70,955.50 A59.40,59.40 0 0 0 1333.10,896.10 Z" fill="#34b394"/><path d="M1273.70,1007.70 A111.60,111.60 0 0 1 1273.70,784.50 L1273.70,836.70 A59.40,59.40 0 0 0 1273.70,955.50 Z" fill="#a8d3da"/><circle cx="1105.8" cy="1048.6" r="7.2" fill="#0f5c54"/><circle cx="1311.4" cy="1048.6" r="7.2" fill="#34b394"/><circle cx="1105.8" cy="1079.2" r="7.2" fill="#f07232"/><circle cx="1311.4" cy="1079.2" r="7.2" fill="#a8d3da"/><rect x="1618.2" y="781.30" width="328.5" height="1.4" fill="#dedede"/><rect x="1618.2" y="846.50" width="328.5" height="1.4" fill="#dedede"/><rect x="1618.2" y="911.30" width="328.5" height="1.4" fill="#dedede"/><rect x="1618.2" y="976.10" width="328.5" height="1.4" fill="#dedede"/><rect x="1618.2" y="1041.20" width="328.5" height="1.4" fill="#dedede"/><path d="M1648.9,1041.9 V885.4 Q1648.9,879.4 1654.9,879.4 H1741 Q1747,879.4 1747,885.4 V1041.9 Z" fill="#a8d3da"/><path d="M1815.3,1041.9 V935.4 Q1815.3,929.4 1821.3,929.4 H1909.2 Q1915.2,929.4 1915.2,935.4 V1041.9 Z" fill="#34b394"/><circle cx="1579" cy="1076.5" r="7" fill="#a8d3da"/><circle cx="1748.5" cy="1076.5" r="7" fill="#34b394"/></svg>
</body></html>
